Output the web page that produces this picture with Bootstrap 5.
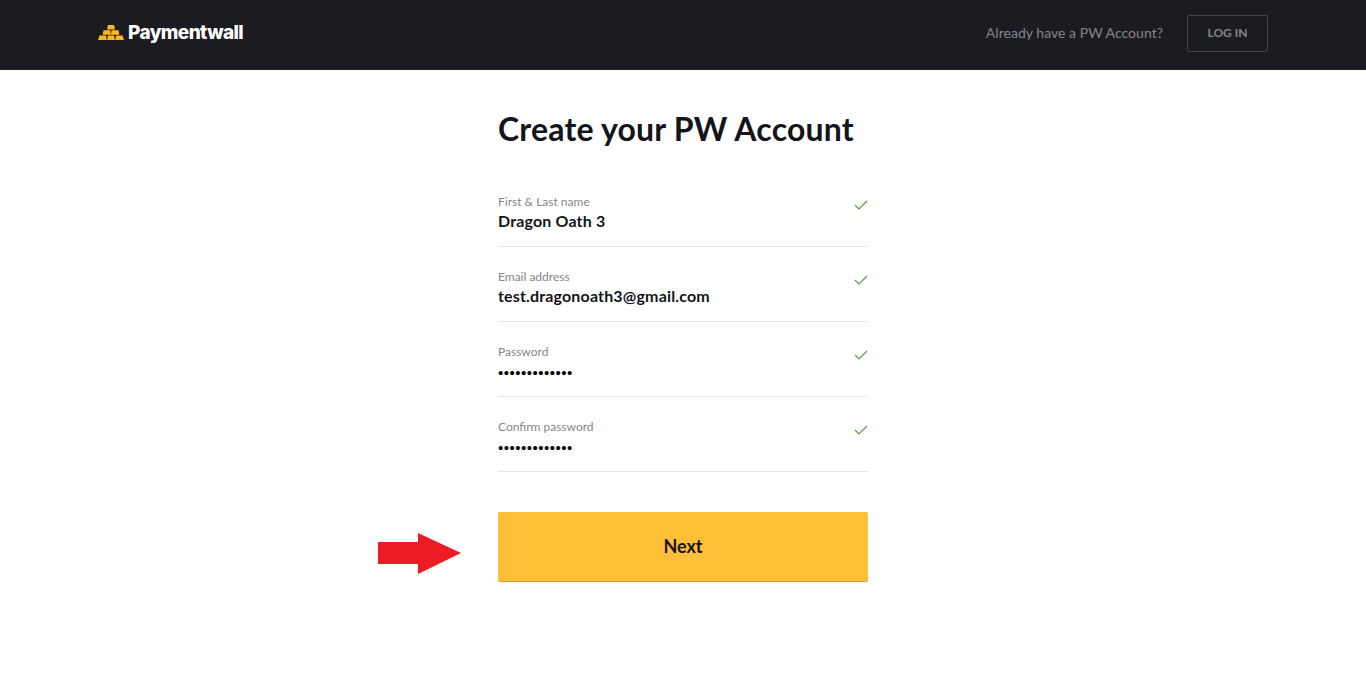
<!DOCTYPE html>
<html lang="en">
<head>
  <meta charset="UTF-8" />
  <meta name="viewport" content="width=device-width, initial-scale=1.0" />
  <title>Paymentwall - Create your PW Account</title>
  <link href="https://cdn.jsdelivr.net/npm/bootstrap@5.3.0/dist/css/bootstrap.min.css" rel="stylesheet">
  <style>
    body {
      font-family: 'Lato', 'Liberation Sans', sans-serif;
      color: #14151a;
      background: #fff;
    }
    .pw-top {
      height: 70px;
      background: #1b1c21;
      padding: 0 98px 3px;
    }
    .pw-brand {
      font-family: 'Inter', sans-serif;
      font-size: 19px;
      font-weight: 800;
      letter-spacing: -0.6px;
      color: #fff;
      text-decoration: none;
    }
    .pw-logo {
      margin-bottom: 2px;
    }
    .pw-ask {
      font-size: 14px;
      letter-spacing: 0.03px;
      color: #84868b;
      margin-right: 24px;
      margin-bottom: 2px;
    }
    .pw-login {
      width: 81px;
      height: 37px;
      padding: 0 0 2px;
      font-size: 12px;
      font-weight: 700;
      color: #84868b;
      background: transparent;
      border: 1px solid #44464c;
      border-radius: 2px;
    }
    .pw-main {
      position: relative;
      width: 370px;
      margin: 0 auto;
      padding-top: 38px;
    }
    .pw-title {
      font-size: 32px;
      font-weight: 700;
      line-height: 42px;
      letter-spacing: 0.2px;
      margin: 0 0 22px;
      color: #14151a;
    }
    .pw-field {
      height: 75px;
      padding-top: 22px;
      border-bottom: 1px solid #e6e6e6;
    }
    .pw-tick {
      margin-top: 6px;
    }
    .pw-label {
      font-size: 12px;
      line-height: 15px;
      color: #84868b;
    }
    .pw-value {
      font-size: 16px;
      font-weight: 700;
      line-height: 24px;
      letter-spacing: 0.16px;
    }
    .pw-dots {
      font-family: 'Liberation Sans', sans-serif;
      font-size: 15px;
      font-weight: 400;
      letter-spacing: 0.5px;
      line-height: 28px;
      color: #000;
    }
    .pw-next {
      width: 100%;
      height: 70px;
      margin-top: 40px;
      font-size: 18px;
      font-weight: 700;
      color: #14151a;
      background: #ffbf38;
      border: 0;
      border-bottom: 1px solid #d9a12f;
      border-radius: 2px;
    }
    .pw-arrow {
      position: absolute;
      left: -120px;
      top: 463px;
    }
  </style>
</head>
<body>

<nav class="pw-top d-flex align-items-center justify-content-between">
  <a class="pw-brand d-flex align-items-center gap-1" href="#">
    <svg class="pw-logo" width="26" height="15" viewBox="0 0 26 15" fill="#ffb81c">
      <polygon points="10,0 16,0 17,4.5 9,4.5" />
      <polygon points="5.5,5.3 12.3,5.3 13,9.7 4.7,9.7" />
      <polygon points="13.7,5.3 20.5,5.3 21.3,9.7 13,9.7" />
      <polygon points="1.5,10.5 8,10.5 8.7,15 0,15" />
      <polygon points="10,10.5 16,10.5 17,15 9,15" />
      <polygon points="18,10.5 24.5,10.5 26,15 17.3,15" />
    </svg>
    Paymentwall
  </a>
  <div class="d-flex align-items-center">
    <span class="pw-ask">Already have a PW Account?</span>
    <button class="btn pw-login" type="button">LOG IN</button>
  </div>
</nav>

<main class="pw-main">
  <h1 class="pw-title">Create your PW Account</h1>
  <form>
    <div class="pw-field d-flex justify-content-between">
      <div>
        <div class="pw-label">First &amp; Last name</div>
        <div class="pw-value">Dragon Oath 3</div>
      </div>
      <svg class="pw-tick" width="14" height="10" viewBox="0 0 14 10" fill="none" stroke="#5f9a4a" stroke-width="1.2"><path d="M1 5l4 4 8-8" /></svg>
    </div>
    <div class="pw-field d-flex justify-content-between">
      <div>
        <div class="pw-label">Email address</div>
        <div class="pw-value">test.dragonoath3@gmail.com</div>
      </div>
      <svg class="pw-tick" width="14" height="10" viewBox="0 0 14 10" fill="none" stroke="#5f9a4a" stroke-width="1.2"><path d="M1 5l4 4 8-8" /></svg>
    </div>
    <div class="pw-field d-flex justify-content-between">
      <div>
        <div class="pw-label">Password</div>
        <div class="pw-value pw-dots">•••••••••••••</div>
      </div>
      <svg class="pw-tick" width="14" height="10" viewBox="0 0 14 10" fill="none" stroke="#5f9a4a" stroke-width="1.2"><path d="M1 5l4 4 8-8" /></svg>
    </div>
    <div class="pw-field d-flex justify-content-between">
      <div>
        <div class="pw-label">Confirm password</div>
        <div class="pw-value pw-dots">•••••••••••••</div>
      </div>
      <svg class="pw-tick" width="14" height="10" viewBox="0 0 14 10" fill="none" stroke="#5f9a4a" stroke-width="1.2"><path d="M1 5l4 4 8-8" /></svg>
    </div>
    <button class="btn pw-next" type="button">Next</button>
  </form>
  <svg class="pw-arrow" width="84" height="42" viewBox="0 0 84 42" fill="#ed1c24"><polygon points="0,9 40,9 40,0 83,20 40,41 40,31 0,31" /></svg>
</main>

<script src="https://cdn.jsdelivr.net/npm/bootstrap@5.3.0/dist/js/bootstrap.bundle.min.js"></script>
</body>
</html>
